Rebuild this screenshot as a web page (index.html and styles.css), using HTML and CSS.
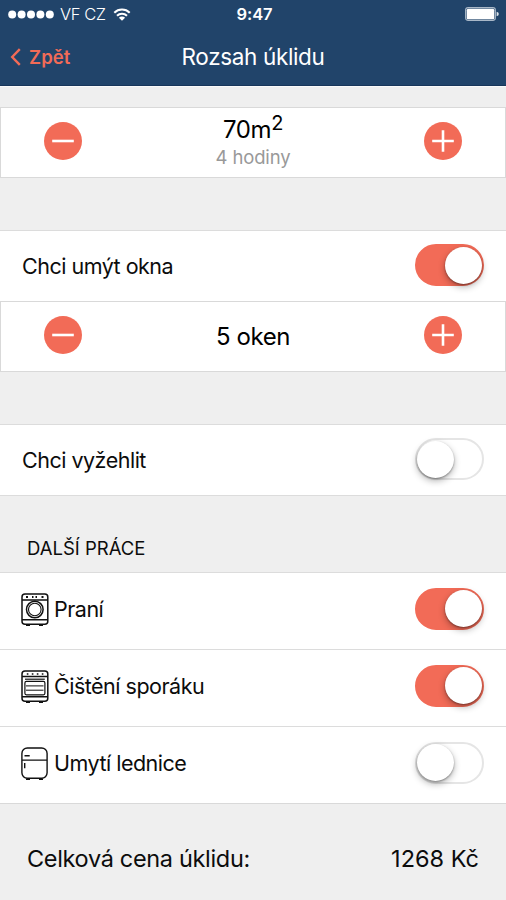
FILE: index.html
```html
<!DOCTYPE html>
<html lang="cs">
<head>
<meta charset="utf-8">
<title>Rozsah úklidu</title>
<link rel="stylesheet" href="styles.css">
</head>
<body>
<svg class="defs" width="0" height="0" aria-hidden="true">
  <symbol id="minus" viewBox="0 0 38 38"><circle cx="19" cy="19" r="19" fill="#f26b57"/><path d="M8.2 19h21.6" stroke="#fff" stroke-width="2.6"/></symbol>
  <symbol id="plus" viewBox="0 0 38 38"><circle cx="19" cy="19" r="19" fill="#f26b57"/><path d="M8.2 19h21.6M19 8.2v21.6" stroke="#fff" stroke-width="2.6"/></symbol>
</svg>
<header class="header">
  <div class="status">
    <div class="carrier">
      <svg class="signal" width="46" height="9" viewBox="0 0 46 9" fill="#fff"><circle cx="4.2" cy="4.5" r="4"/><circle cx="13.6" cy="4.5" r="4"/><circle cx="23" cy="4.5" r="4"/><circle cx="32.4" cy="4.5" r="4"/><circle cx="41.8" cy="4.5" r="4"/></svg>
      <span class="operator">VF CZ</span>
      <svg class="wifi" width="18" height="13" viewBox="0 0 18 13" fill="none" stroke="#fff" stroke-width="2"><path d="M1.3 4.8a10.9 10.9 0 0 1 15.4 0M4 7.7a7.1 7.1 0 0 1 10 0"/><path d="M9 12.8 5.9 9.7a4.4 4.4 0 0 1 6.2 0z" fill="#fff" stroke="none"/></svg>
    </div>
    <div class="clock">9:47</div>
    <svg class="battery" width="35" height="14" viewBox="0 0 35 14"><rect x=".6" y=".6" width="29.8" height="12.8" rx="2.6" fill="none" stroke="#a9b8c8" stroke-width="1.1"/><rect x="1.7" y="1.7" width="27.6" height="10.6" rx="1.5" fill="#fff"/><path d="M31.6 4.7q2.2.6 2.2 2.3t-2.2 2.3z" fill="#dce3ea"/></svg>
  </div>
  <nav class="nav">
    <a class="back"><svg width="11" height="18" viewBox="0 0 11 18" fill="none" stroke="#f26b57" stroke-width="2.4"><path d="M9.8 1.2 2.2 9l7.6 7.8"/></svg><span class="back-text">Zpět</span></a>
    <h1 class="title">Rozsah úklidu</h1>
  </nav>
</header>
<main>
  <section class="stepper area">
    <svg class="round"><use href="#minus"/></svg>
    <div class="value"><div class="amount m2">70m<sup>2</sup></div><div class="hours">4 hodiny</div></div>
    <svg class="round"><use href="#plus"/></svg>
  </section>
  <section class="row windows"><span class="label">Chci umýt okna</span><span class="toggle on"></span></section>
  <section class="stepper">
    <svg class="round"><use href="#minus"/></svg>
    <div class="value"><div class="amount count">5 oken</div></div>
    <svg class="round"><use href="#plus"/></svg>
  </section>
  <section class="row ironing"><span class="label">Chci vyžehlit</span><span class="toggle"></span></section>
  <h2 class="heading">DALŠÍ PRÁCE</h2>
  <section class="extras">
    <div class="row item">
      <svg class="icon" viewBox="0 0 28 34" fill="none" stroke="#111" stroke-width="1.5"><rect x="1" y="1" width="25.8" height="30.3" rx="3"/><path d="M1 6.9h25.8M1 26.8h25.8"/><circle cx="13.8" cy="16.5" r="8.3"/><circle cx="13.8" cy="16.5" r="6.3" stroke-width="1.1"/><path d="M5 32.3h4M18 32.3h4" stroke-width="1.6"/><path d="M5 4h2M11 4h1.5M14.5 4H16M20.5 4h2" stroke-width="1.8"/></svg>
      <span class="label">Praní</span><span class="toggle on"></span>
    </div>
    <div class="row item">
      <svg class="icon" viewBox="0 0 28 34" fill="none" stroke="#111" stroke-width="1.5"><rect x="1" y="1" width="25.8" height="30.3" rx="3"/><path d="M1 6.6h25.8M1 26.8h25.8"/><path d="M4 9.2h19.8" stroke-width="1.2"/><rect x="3.9" y="11.4" width="20" height="13.4" rx="1.5" stroke-width="1.2"/><path d="M5 15.9h17.5M5 20.2h17.5" stroke-width="1"/><path d="M5 32.3h4M18 32.3h4" stroke-width="1.6"/><path d="M5.8 4h1.6M10.8 4h1.6M15.8 4h1.6M20.8 4h1.6" stroke-width="1.7"/></svg>
      <span class="label">Čištění sporáku</span><span class="toggle on"></span>
    </div>
    <div class="row item">
      <svg class="icon" viewBox="0 0 28 34" fill="none" stroke="#111" stroke-width="1.4"><rect x=".9" y="1" width="25.2" height="30.3" rx="5.5"/><path d="M1 13.1h25M3.5 8.8h5.2M3.7 16v5.3M5 32.3h4M18 32.3h4"/></svg>
      <span class="label">Umytí lednice</span><span class="toggle"></span>
    </div>
  </section>
</main>
<footer class="total"><span class="total-label">Celková cena úklidu:</span><span class="price">1268 Kč</span></footer>
</body>
</html>
```

FILE: styles.css
```css
* { box-sizing: border-box; }
body { margin: 0; width: 506px; height: 900px; overflow: hidden; background: #efefef; color: #0c0c0c; font-family: Inter, "Liberation Sans", sans-serif; font-size: 21.5px; letter-spacing: -0.5px; display: flex; flex-direction: column; }
h1, h2 { margin: 0; font-weight: 400; }
.defs { position: absolute; }
.header { height: 86px; background: #21446a; border-bottom: 1px solid #18365a; box-shadow: 0 1px 0 #fafafa; color: #fff; flex: none; }
.status { height: 28px; display: grid; grid-template-columns: 1fr auto 1fr; align-items: center; padding: 0 7px 0 8px; }
.carrier { display: flex; align-items: center; }
.operator { font-size: 16.5px; font-weight: 300; margin: 0 7px 0 6px; letter-spacing: -0.4px; }
.clock { font-size: 16.5px; font-weight: 600; letter-spacing: -0.1px; padding-left: 2px; }
.battery { justify-self: end; margin-right: -1px; }
.nav { height: 57px; display: grid; grid-template-columns: 1fr auto 1fr; align-items: center; padding: 0 10px; }
.back { display: flex; align-items: center; gap: 8px; color: #f26b57; font-size: 18.5px; font-weight: 600; letter-spacing: 0.1px; }
.title { font-size: 22.5px; letter-spacing: -0.35px; }
.stepper { height: 71px; background: #fff; border: 1px solid #d9d9d9; display: grid; grid-template-columns: 38px 1fr 38px; align-items: center; padding: 0 43px; }
.area { margin-top: 21px; }
.round { width: 38px; height: 38px; margin-bottom: 4px; }
.value { text-align: center; }
.amount { font-size: 24px; line-height: 28px; letter-spacing: -0.4px; color: #000; }
.count { padding-top: 1px; }
.amount sup { font-size: 20px; line-height: 0; vertical-align: 8px; }
.hours { color: #999; font-size: 18.5px; letter-spacing: -0.15px; line-height: 26px; }
.row { height: 71px; background: #fff; border-top: 1px solid #dcdcdc; display: flex; align-items: center; padding: 0 21px 0 22px; }
.windows { margin-top: 52px; }
.ironing { margin-top: 52px; height: 72px; border-bottom: 1px solid #dcdcdc; }
.toggle { width: 69px; height: 42px; border-radius: 21px; border: 2px solid #e5e5e5; margin: 0 1px 2px auto; display: flex; align-items: center; }
.toggle::before { content: ""; width: 37px; height: 37px; border-radius: 50%; background: #fff; box-shadow: 0 3px 7px rgba(0,0,0,.3), 0 1px 2px rgba(0,0,0,.35); }
.toggle.on { background: #f26b57; border-color: #f26b57; justify-content: flex-end; }
.item .toggle { margin-bottom: 0; }
.heading { height: 76px; font-size: 18.5px; letter-spacing: 0; line-height: 22px; padding: 41px 27px 0; }
.extras { border-bottom: 1px solid #d9d9d9; }
.item { height: 77px; padding-bottom: 5px; padding-left: 21px; }
.icon { width: 28px; height: 34px; margin: 3px 5px 0 0; }
.item .label { margin-top: 1px; }
.total { flex: 1; display: flex; justify-content: space-between; align-items: center; padding: 13px 27px 0; font-size: 23.5px; letter-spacing: -0.33px; }
.price { letter-spacing: 0; }
```
